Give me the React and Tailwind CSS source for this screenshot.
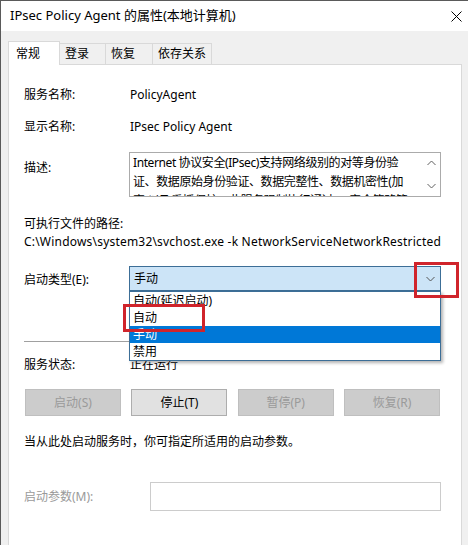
const font = { fontFamily: '"Noto Sans", "Noto Sans CJK SC", sans-serif' };

const Tab = ({ label, active, width }) => (
  <div
    className={
      active
        ? "relative z-10 -mb-px h-[24px] border border-b-0 border-[#d9d9d9] bg-white pl-[7px] pt-[2px] text-[12px] leading-[20px] text-black"
        : "h-[21px] border border-b-0 border-l-0 border-[#d9d9d9] bg-[#f0f0f0] pl-[5px] pt-[1px] text-[12px] leading-[18px] text-black"
    }
    style={{ width }}
  >
    {label}
  </div>
);

const Button = ({ label, enabled }) => (
  <div
    className={
      enabled
        ? "flex h-[27px] w-[96px] items-center justify-center border border-[#adadad] bg-[#e1e1e1] text-[12px] text-black"
        : "flex h-[27px] w-[96px] items-center justify-center border border-[#bfbfbf] bg-[#cccccc] text-[12px] text-[#9a9a9a]"
    }
  >
    {label}
  </div>
);

const Chevron = ({ up, className }) => (
  <svg width="9" height="6" viewBox="0 0 9 6" className={className}>
    <path
      d={up ? "M0.5 5 L4.5 1 L8.5 5" : "M0.5 1 L4.5 5 L8.5 1"}
      fill="none"
      stroke="currentColor"
      strokeWidth="1"
    />
  </svg>
);

export default function App() {
  return (
    <div
      className="relative h-[545px] w-[468px] overflow-hidden border-l border-t border-[#5a5a5a] bg-[#f0f0f0]"
      style={font}
    >
      {/* title bar */}
      <div className="flex h-[30px] items-center justify-between bg-white pl-[9px] pr-[6px]">
        <span className="text-[13px] text-black">IPsec Policy Agent 的属性(本地计算机)</span>
        <svg width="11" height="11" viewBox="0 0 11 11" className="text-black">
          <path d="M0.5 0.5 L10.5 10.5 M10.5 0.5 L0.5 10.5" stroke="currentColor" strokeWidth="1" />
        </svg>
      </div>

      {/* tabs */}
      <div className="mt-[10px] flex items-end pl-[7px]">
        <Tab label="常规" active width={52} />
        <Tab label="登录" width={46} />
        <Tab label="恢复" width={47} />
        <Tab label="依存关系" width={59} />
      </div>

      {/* panel */}
      <div className="ml-[7px] h-[520px] w-[454px] border border-[#d9d9d9] bg-white pl-[15px] text-[12px] text-black">
        <div className="mt-[20px] flex h-[20px] items-center">
          <span className="w-[106px]">服务名称:</span>
          <span>PolicyAgent</span>
        </div>
        <div className="mt-[12px] flex h-[20px] items-center">
          <span className="w-[106px]">显示名称:</span>
          <span>IPsec Policy Agent</span>
        </div>

        <div className="mt-[15px] flex">
          <span className="w-[105px] pt-[6px] leading-[20px]">描述:</span>
          <div className="flex h-[45px] w-[312px] border border-[#ababab]">
            <div className="w-[293px] overflow-hidden whitespace-nowrap pl-[3px] text-[12px] leading-[19px] tracking-[-0.4px]">
              <div>Internet 协议安全(IPsec)支持网络级别的对等身份验</div>
              <div>证、数据原始身份验证、数据完整性、数据机密性(加</div>
              <div>密)以及重播保护。此服务强制执行通过 IP 安全策略管</div>
            </div>
            <div className="flex w-[17px] flex-col items-center justify-between py-[7px] text-[#606060]">
              <Chevron up />
              <Chevron />
            </div>
          </div>
        </div>

        <div className="mt-[18px] leading-[18px]">可执行文件的路径:</div>
        <div className="w-[417px] overflow-hidden whitespace-nowrap leading-[18px] tracking-[0.2px]">
          C:\Windows\system32\svchost.exe -k NetworkServiceNetworkRestricted
        </div>

        <div className="mt-[15px] flex items-center">
          <span className="w-[105px] pt-[3px]">启动类型(E):</span>
          <div className="flex h-[25px] w-[312px] items-center justify-between border border-[#3c6e97] bg-[#cce4f7] pl-[4px] pr-[5px]">
            <span>手动</span>
            <Chevron className="text-[#555]" />
          </div>
        </div>

        <div className="mt-[50px] w-[417px] border-t border-[#a0a0a0]" />

        <div className="mt-[13px] flex h-[20px] items-center">
          <span className="w-[106px]">服务状态:</span>
          <span>正在运行</span>
        </div>

        <div className="mt-[14px] flex w-[416px] justify-between pl-px">
          <Button label="启动(S)" />
          <Button label="停止(T)" enabled />
          <Button label="暂停(P)" />
          <Button label="恢复(R)" />
        </div>

        <div className="mt-[16px] leading-[20px]">当从此处启动服务时，你可指定所适用的启动参数。</div>

        <div className="mt-[30px] flex items-center">
          <span className="w-[126px] text-[#9a9a9a]">启动参数(M):</span>
          <div className="h-[29px] w-[291px] border border-[#cccccc]" />
        </div>
      </div>

      {/* open dropdown list */}
      <div className="absolute left-[128px] top-[290px] w-[312px] border border-[#3c6e97] bg-white text-[12px] text-black shadow-[2px_2px_3px_rgba(0,0,0,0.3)]">
        <div className="h-[17px] pl-[3px] leading-[17px]">自动(延迟启动)</div>
        <div className="h-[17px] pl-[3px] leading-[17px]">自动</div>
        <div className="h-[17px] bg-[#0078d7] pl-[3px] leading-[17px] text-white">手动</div>
        <div className="h-[17px] pl-[3px] leading-[17px]">禁用</div>
      </div>

      {/* red annotation boxes */}
      <div className="absolute left-[122px] top-[303px] h-[28px] w-[82px] border-[3px] border-[#d0242b]" />
      <div className="absolute left-[413px] top-[261px] h-[36px] w-[45px] border-[3px] border-[#d0242b]" />
    </div>
  );
}
